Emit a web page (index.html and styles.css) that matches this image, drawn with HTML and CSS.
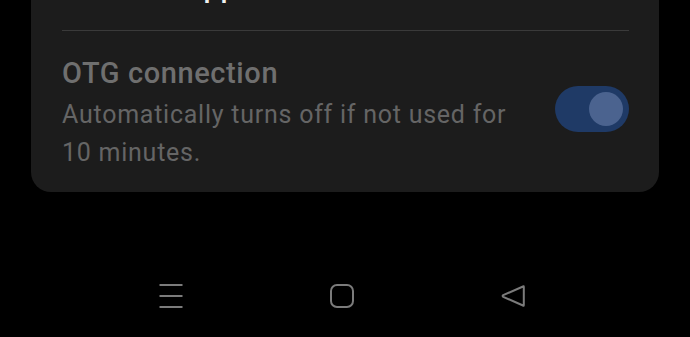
FILE: index.html
```html
<!DOCTYPE html>
<html>
<head>
<meta charset="utf-8">
<link rel="stylesheet" href="styles.css">
</head>
<body>
<div class="card">
  <div class="prev">Selected apps</div>
  <div class="divider"></div>
  <div class="row">
    <div class="texts">
      <div class="title">OTG connection</div>
      <div class="sub">Automatically turns off if not used for 10 minutes.</div>
    </div>
    <div class="switch"><div class="thumb"></div></div>
  </div>
</div>
<nav class="nav">
  <svg class="icon" viewBox="0 0 24 24" width="24" height="24"><path d="M0.5 1h23M0.5 12h23M0.5 23h23" fill="none" stroke="#7b7b7b" stroke-width="2"/></svg>
  <svg class="icon" viewBox="0 0 24 24" width="24" height="24"><rect x="1" y="1" width="22" height="22" rx="6" fill="none" stroke="#7b7b7b" stroke-width="2"/></svg>
  <svg class="icon" viewBox="0 0 24 24" width="24" height="24"><path d="M22 2.5 Q22.8 1.6 22.8 3 L22.8 21 Q22.8 22.4 22 21.5 L2.2 12.8 Q1 12 2.2 11.2 Z" fill="none" stroke="#7b7b7b" stroke-width="2" stroke-linejoin="round"/></svg>
</nav>
</body>
</html>
```

FILE: styles.css
```css
html, body {
  margin: 0;
  padding: 0;
  background: #000;
  font-family: Roboto, "Noto Sans", sans-serif;
  overflow: hidden;
}

.card {
  margin: -32px 31px 0 31px;
  background: #1c1c1c;
  border-radius: 20px;
  padding: 0 30px 20px 31px;
}

.prev {
  font-size: 29px;
  line-height: 38px;
  font-weight: 500;
  letter-spacing: 0.6px;
  color: #f0f0f0;
  padding-bottom: 24px;
}

.divider {
  height: 1px;
  background: #3a3a3a;
}

.row {
  display: flex;
  justify-content: space-between;
  align-items: flex-start;
  padding-top: 23.5px;
}

.texts {
  width: 470px;
}

.title {
  font-size: 29px;
  line-height: 36px;
  font-weight: 500;
  letter-spacing: 0.6px;
  color: #6f6f6f;
}

.sub {
  margin-top: 5px;
  font-size: 25px;
  line-height: 38.4px;
  letter-spacing: 0.75px;
  color: #656565;
}

.switch {
  margin-top: 31.5px;
  width: 74px;
  height: 46px;
  border-radius: 23px;
  background: #1f3a66;
  display: flex;
  align-items: center;
  justify-content: flex-end;
  padding-right: 6px;
  box-sizing: border-box;
}

.thumb {
  width: 34px;
  height: 34px;
  border-radius: 50%;
  background: #4b638f;
}

.nav {
  display: grid;
  grid-template-columns: repeat(3, 171px);
  justify-content: start;
  justify-items: center;
  padding-left: 85px;
  margin-top: 92px;
}

.icon {
  display: block;
}
```
